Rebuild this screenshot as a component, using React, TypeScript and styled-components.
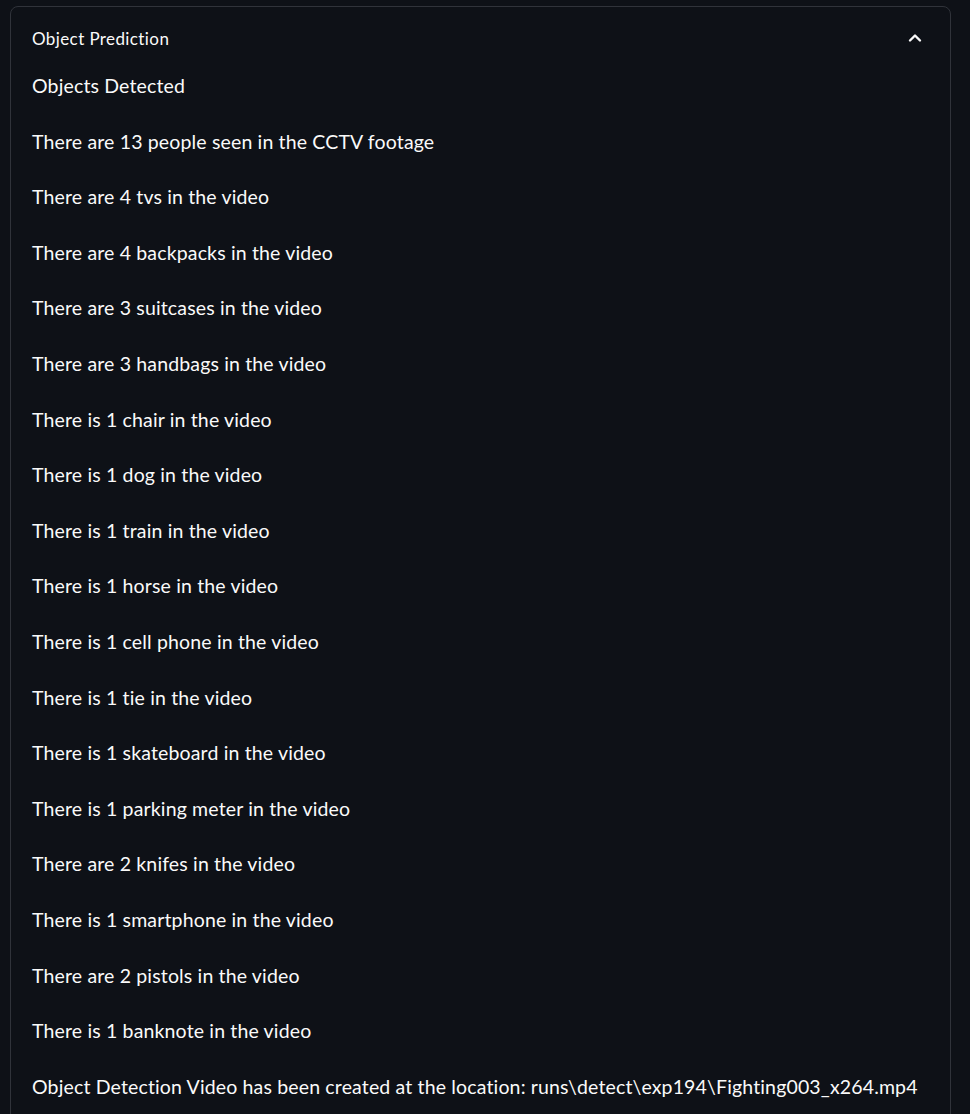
import React from "react";
import styled, { createGlobalStyle } from "styled-components";

const Global = createGlobalStyle`
  html, body {
    margin: 0;
    padding: 0;
    background: #0e1117;
    overflow: hidden;
  }
  body {
    font-family: Lato, "Noto Sans", sans-serif;
    color: #fafafa;
  }
`;

const Page = styled.div`
  padding: 6px 19px 0 10px;
  height: 1114px;
  box-sizing: border-box;
`;

const Expander = styled.section`
  border: 1px solid #30333a;
  border-radius: 8px;
  height: 1200px;
  box-sizing: border-box;
`;

const Header = styled.div`
  height: 62px;
  display: flex;
  align-items: center;
  justify-content: space-between;
  padding: 0 28px 0 21px;
`;

const Title = styled.span`
  font-size: 17px;
  letter-spacing: 0.4px;
`;

const Body = styled.div`
  display: flex;
  flex-direction: column;
  gap: 23.6px;
  padding: 1px 21px 0;
`;

const Line = styled.p`
  margin: 0;
  font-size: 19.5px;
  letter-spacing: 0.15px;
  line-height: 32px;
  white-space: nowrap;
`;

const Chevron = () => (
  <svg width="14" height="10" viewBox="0 0 14 10" aria-hidden>
    <polyline
      points="2,7.5 7,2.5 12,7.5"
      fill="none"
      stroke="#fafafa"
      strokeWidth="2.4"
      strokeLinecap="round"
      strokeLinejoin="round"
    />
  </svg>
);

const lines = [
  "Objects Detected",
  "There are 13 people seen in the CCTV footage",
  "There are 4 tvs in the video",
  "There are 4 backpacks in the video",
  "There are 3 suitcases in the video",
  "There are 3 handbags in the video",
  "There is 1 chair in the video",
  "There is 1 dog in the video",
  "There is 1 train in the video",
  "There is 1 horse in the video",
  "There is 1 cell phone in the video",
  "There is 1 tie in the video",
  "There is 1 skateboard in the video",
  "There is 1 parking meter in the video",
  "There are 2 knifes in the video",
  "There is 1 smartphone in the video",
  "There are 2 pistols in the video",
  "There is 1 banknote in the video",
  "Object Detection Video has been created at the location: runs\\detect\\exp194\\Fighting003_x264.mp4",
];

export default function App() {
  return (
    <Page>
      <Global />
      <Expander>
        <Header>
          <Title>Object Prediction</Title>
          <Chevron />
        </Header>
        <Body>
          {lines.map((l) => (
            <Line key={l}>{l}</Line>
          ))}
        </Body>
      </Expander>
    </Page>
  );
}
